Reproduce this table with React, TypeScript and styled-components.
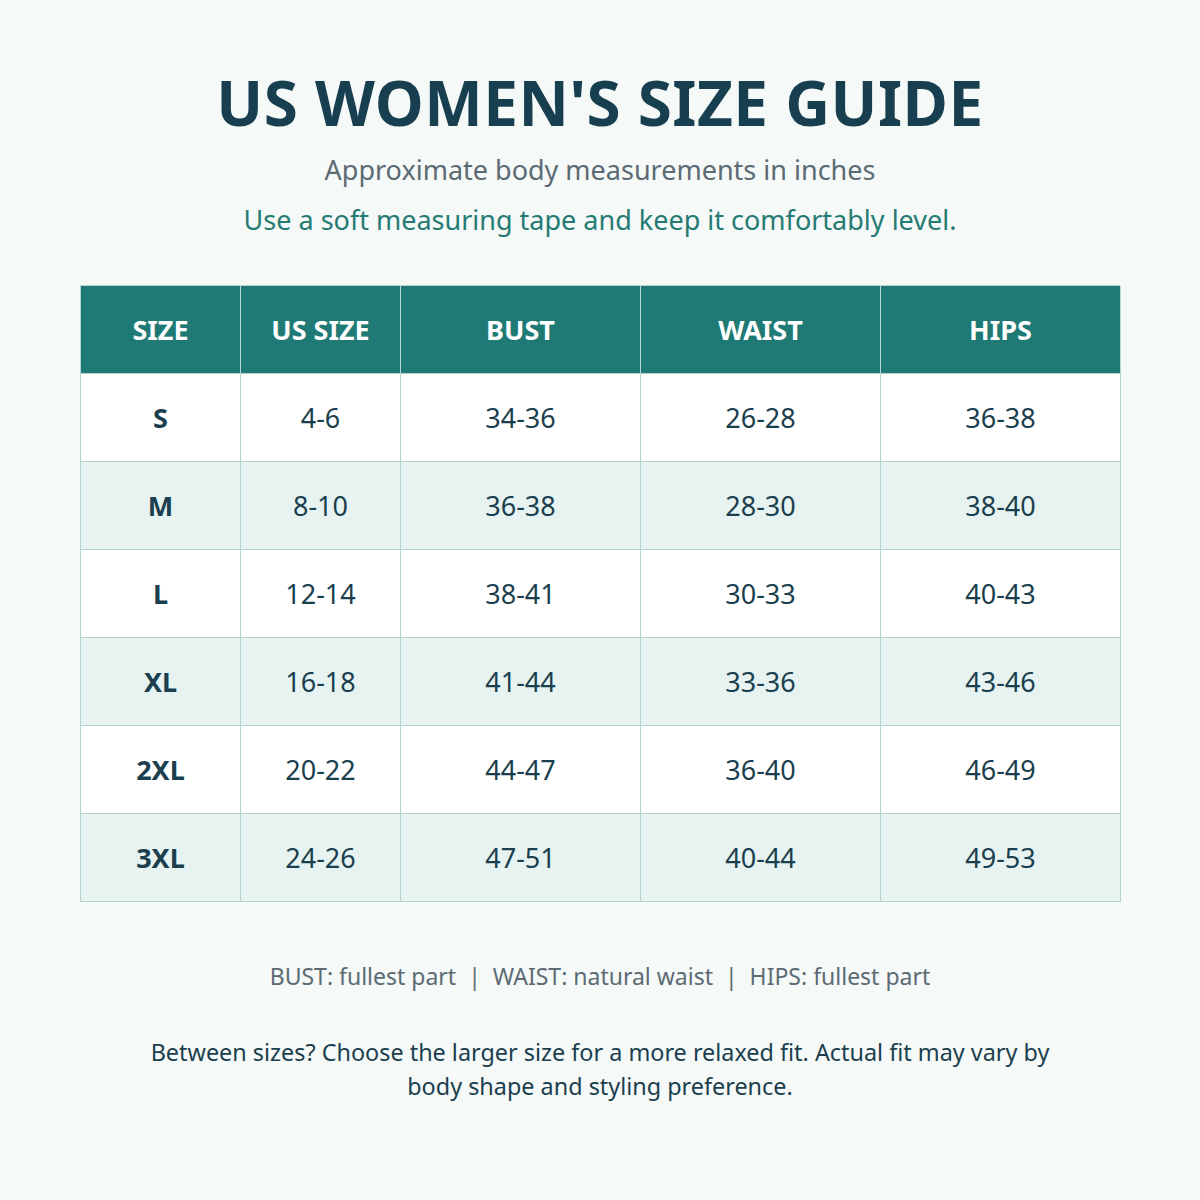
import React from "react";
import styled, { createGlobalStyle } from "styled-components";

const Global = createGlobalStyle`
  html, body { margin: 0; padding: 0; background: #f5f9f8; }
  body { font-family: "Noto Sans", "Open Sans", sans-serif; }
`;

const Page = styled.div`
  width: 1200px;
  height: 1200px;
  box-sizing: border-box;
  padding: 62px 80px 0;
  display: flex;
  flex-direction: column;
  align-items: center;
  background: #f5f9f8;
`;

const Title = styled.h1`
  margin: 0 0 3px;
  font-size: 62px;
  line-height: 80px;
  font-weight: 700;
  color: #173f4f;
  letter-spacing: 0.5px;
`;

const Sub = styled.p<{ $accent?: boolean }>`
  margin: 0;
  font-size: 27px;
  line-height: 50px;
  color: ${(p) => (p.$accent ? "#257b73" : "#5c6b73")};
`;

const Table = styled.div`
  margin-top: 40px;
  width: 1040px;
  display: grid;
  grid-template-columns: 160px 160px 240px 240px 240px;
  border-top: 1px solid #b3d3cf;
  border-left: 1px solid #b3d3cf;
  box-sizing: border-box;
`;

const Cell = styled.div<{ $head?: boolean; $alt?: boolean; $bold?: boolean }>`
  height: 88px;
  display: flex;
  align-items: center;
  justify-content: center;
  box-sizing: border-box;
  border-right: 1px solid ${(p) => (p.$head ? "#b9d9d5" : "#b3d3cf")};
  border-bottom: 1px solid #b3d3cf;
  background: ${(p) => (p.$head ? "#1f7a76" : p.$alt ? "#e6f3f1" : "#ffffff")};
  color: ${(p) => (p.$head ? "#ffffff" : "#1b3f4e")};
  font-size: 27px;
  font-weight: ${(p) => (p.$head || p.$bold ? 700 : 400)};
`;

const Legend = styled.p`
  margin: 59px 0 0;
  font-size: 23px;
  line-height: 30px;
  color: #5c6b73;
  white-space: pre;
`;

const Note = styled.p`
  margin: 44px 0 0;
  width: 940px;
  text-align: center;
  font-size: 23.4px;
  line-height: 34px;
  color: #1b3f4e;
`;

const heads = ["SIZE", "US SIZE", "BUST", "WAIST", "HIPS"];
const rows = [
  ["S", "4-6", "34-36", "26-28", "36-38"],
  ["M", "8-10", "36-38", "28-30", "38-40"],
  ["L", "12-14", "38-41", "30-33", "40-43"],
  ["XL", "16-18", "41-44", "33-36", "43-46"],
  ["2XL", "20-22", "44-47", "36-40", "46-49"],
  ["3XL", "24-26", "47-51", "40-44", "49-53"],
];

export default function App() {
  return (
    <>
      <Global />
      <Page>
        <Title>US WOMEN'S SIZE GUIDE</Title>
        <Sub>Approximate body measurements in inches</Sub>
        <Sub $accent>Use a soft measuring tape and keep it comfortably level.</Sub>
        <Table>
          {heads.map((h) => (
            <Cell key={h} $head>
              {h}
            </Cell>
          ))}
          {rows.map((r, i) =>
            r.map((c, j) => (
              <Cell key={`${i}-${j}`} $alt={i % 2 === 1} $bold={j === 0}>
                {c}
              </Cell>
            ))
          )}
        </Table>
        <Legend>{"BUST: fullest part  |  WAIST: natural waist  |  HIPS: fullest part"}</Legend>
        <Note>
          Between sizes? Choose the larger size for a more relaxed fit. Actual fit may vary by body
          shape and styling preference.
        </Note>
      </Page>
    </>
  );
}
